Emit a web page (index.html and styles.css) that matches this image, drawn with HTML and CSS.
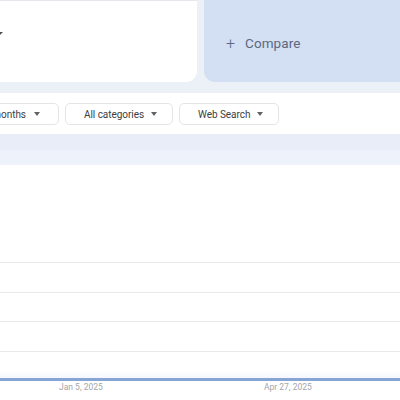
FILE: index.html
```html
<!DOCTYPE html>
<html>
<head>
<meta charset="utf-8">
<link rel="stylesheet" href="styles.css">
</head>
<body>
<div class="page">
  <div class="cards">
    <div class="card term">
      <span class="term-caret"></span>
    </div>
    <div class="card compare">
      <span class="plus">+</span>
      <span class="compare-label">Compare</span>
    </div>
  </div>
  <div class="filters">
    <div class="chip chip-first"><span>Past 12 months</span><span class="caret"></span></div>
    <div class="chip"><span>All categories</span><span class="caret"></span></div>
    <div class="chip"><span>Web Search</span><span class="caret"></span></div>
  </div>
  <div class="chart-head">
    <div class="head-top"></div>
    <div class="head-bottom"></div>
  </div>
  <div class="chart">
    <div class="chart-space"></div>
    <div class="grid-row"></div>
    <div class="grid-row r2"></div>
    <div class="grid-row"></div>
    <div class="grid-row last"></div>
    <div class="baseline"></div>
    <div class="axis">
      <span class="tick t1">Jan 5, 2025</span>
      <span class="tick t2">Apr 27, 2025</span>
    </div>
  </div>
</div>
</body>
</html>
```
FILE: styles.css
```css
html, body {
  margin: 0;
  padding: 0;
  background: #ffffff;
  font-family: Roboto, "Liberation Sans", sans-serif;
}
.page {
  width: 400px;
  height: 400px;
  overflow: hidden;
  background: #ffffff;
}
.cards {
  display: flex;
  gap: 7px;
  margin-left: -20px;
  margin-right: -20px;
  padding-bottom: 11px;
  background: #ecf0f7;
}
.card {
  height: 82px;
  border-radius: 0 0 11px 11px;
  box-sizing: border-box;
}
.term {
  width: 217px;
  background: #ffffff;
  border-top: 1px solid #e4e7ec;
  display: flex;
  align-items: flex-start;
  padding-top: 31px;
}
.term-caret {
  margin-left: 15px;
  width: 0;
  height: 0;
  border-left: 4px solid transparent;
  border-right: 4px solid transparent;
  border-top: 4px solid #4a4d52;
}
.compare {
  flex: 1;
  background: #d3dff2;
  display: flex;
  align-items: center;
  padding-left: 22px;
  padding-top: 4px;
  color: #5d6880;
}
.plus {
  font-size: 16px;
  font-weight: 300;
  width: 19px;
}
.compare-label {
  font-size: 13.5px;
  letter-spacing: 0.1px;
}
.filters {
  display: flex;
  gap: 6px;
  height: 41px;
  padding-top: 10px;
  box-sizing: border-box;
  background: #ffffff;
  margin-left: -40px;
}
.chip {
  height: 22px;
  box-sizing: border-box;
  border: 1px solid #e3e5e9;
  border-radius: 5px;
  display: flex;
  align-items: center;
  padding: 0 15px 0 18px;
  gap: 7px;
  font-size: 10px;
  letter-spacing: -0.05px;
  color: #3c4043;
}
.chip-first {
  width: 99px;
  justify-content: flex-end;
  padding-right: 18px;
  gap: 8px;
  white-space: nowrap;
}
.caret {
  width: 0;
  height: 0;
  border-left: 3.5px solid transparent;
  border-right: 3.5px solid transparent;
  border-top: 4px solid #5f6368;
}
.chart-head {
  display: flex;
  flex-direction: column;
}
.head-top {
  height: 16px;
  background: #e9edf7;
}
.head-bottom {
  height: 15px;
  background: #eef2fa;
}
.chart {
  display: flex;
  flex-direction: column;
  background: #ffffff;
}
.chart-space {
  height: 97px;
}
.grid-row {
  height: 29px;
  border-top: 1px solid #e9e9ea;
}
.r2 {
  height: 28px;
}
.grid-row.last {
  height: 26px;
  background: linear-gradient(to bottom, #ffffff 0%, #ffffff 70%, #f5f7fd 100%);
}
.baseline {
  height: 3px;
  background: #86a5d4;
}
.axis {
  display: flex;
  padding-top: 1px;
  font-size: 8.5px;
  color: #a3a6aa;
}
.tick {
  white-space: nowrap;
}
.t1 {
  margin-left: 59px;
  width: 205px;
}
```
